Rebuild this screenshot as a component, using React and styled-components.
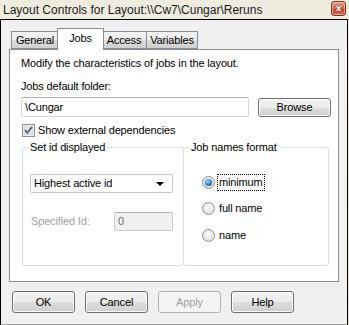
import React from 'react'
import styled, { createGlobalStyle } from 'styled-components'

const GlobalStyle = createGlobalStyle`
  html, body {
    margin: 0;
    padding: 0;
    background: #e9e4d6;
  }
  body {
    font-family: 'Liberation Sans', Arial, sans-serif;
    font-size: 11px;
    letter-spacing: -0.15px;
    color: #000;
  }
  * { box-sizing: border-box; }
`

const Window = styled.div`
  width: 349px;
  height: 325px;
  display: flex;
  flex-direction: column;
  background: linear-gradient(#efebdf, #e6e0cf);
  overflow: hidden;
`

const TitleBar = styled.div`
  height: 19px;
  display: flex;
  align-items: flex-start;
  padding: 0 3px 0 3px;
`

const Title = styled.div`
  flex: 1;
  font-family: 'Liberation Sans', Arial, sans-serif;
  font-size: 12px;
  letter-spacing: 0;
  line-height: 14px;
  padding-top: 3px;
  color: #1b1b1b;
  white-space: nowrap;
`

const CloseButton = styled.div`
  width: 15px;
  height: 15px;
  margin-top: 1px;
  border: 1px solid #7a3222;
  border-radius: 3px;
  background: linear-gradient(#e8a08c, #d2654c 50%, #c2432b 51%, #cf6a4e);
  box-shadow: inset 0 0 0 1px rgba(255, 220, 200, 0.5);
  display: flex;
  align-items: center;
  justify-content: center;
  color: #fff;
  font-family: 'DejaVu Sans', sans-serif;
  font-weight: bold;
  font-size: 9px;
  line-height: 1;
  text-shadow: 0 0 1px #5a1a10, 0 0 1px #5a1a10;
`

const Client = styled.div`
  flex: 1;
  margin-right: 1px;
  background: #f0f0f0;
  border: 1px solid #000;
  border-bottom-color: #a0a0a0;
  padding: 8px 0 0 8px;
  display: flex;
  flex-direction: column;
`

const TabStrip = styled.div`
  height: 21px;
  display: flex;
  align-items: flex-end;
  padding-left: 2px;
  position: relative;
  z-index: 1;
`

const Tab = styled.div`
  width: ${p => p.w}px;
  height: ${p => (p.active ? 22 : 18)}px;
  margin: ${p => (p.active ? '0 -2px -1px -2px' : '0 0 0 -1px')};
  border: 1px solid #898c95;
  border-bottom: ${p => (p.active ? 'none' : '1px solid #898c95')};
  background: ${p => (p.active ? '#fff' : 'linear-gradient(#f2f2f2, #ebebeb 50%, #dddddd 51%, #cfcfcf)')};
  z-index: ${p => (p.active ? 2 : 1)};
  display: flex;
  justify-content: center;
  padding-top: ${p => (p.active ? 3 : 2)}px;
  line-height: 13px;
  &:first-child { margin-left: 0; }
`

const Panel = styled.div`
  width: 330px;
  height: 233px;
  background: #fff;
  border: 1px solid #898c95;
  padding: 7px 0 0 11px;
  display: flex;
  flex-direction: column;
`

const Text = styled.div`
  line-height: 13px;
  margin-top: ${p => p.mt || 0}px;
  color: ${p => (p.disabled ? '#a0a0a0' : '#000')};
`

const Label = styled(Text)`
  width: ${p => p.w}px;
  padding-left: 1px;
`

const Row = styled.div`
  display: flex;
  align-items: center;
  margin-top: ${p => p.mt || 0}px;
  gap: ${p => p.gap || 0}px;
`

const TextBox = styled.div`
  width: ${p => p.w}px;
  height: ${p => p.h || 20}px;
  border: 1px solid ${p => (p.disabled ? '#c9c9c9' : '#d5d9de')};
  border-top-color: ${p => (p.disabled ? '#afafaf' : '#abadb3')};
  border-radius: 2px;
  background: ${p => (p.disabled ? '#f0f0f0' : '#fff')};
  color: ${p => (p.disabled ? '#6d6d6d' : '#000')};
  padding-left: 3px;
  display: flex;
  align-items: center;
  line-height: 13px;
`

const Button = styled.div`
  width: ${p => p.w}px;
  height: ${p => p.h}px;
  border: 1px solid ${p => (p.disabled ? '#adb2b5' : '#707070')};
  border-radius: 3px;
  background: ${p =>
    p.disabled
      ? '#f4f4f4'
      : 'linear-gradient(#f2f2f2, #ebebeb 50%, #dddddd 51%, #cfcfcf)'};
  box-shadow: inset 0 0 0 1px ${p => (p.disabled ? '#f4f4f4' : '#fcfcfc')};
  color: ${p => (p.disabled ? '#a0a0a0' : '#000')};
  display: flex;
  align-items: center;
  justify-content: center;
  line-height: 13px;
`

const CheckRow = styled.label`
  display: flex;
  align-items: center;
  gap: 3px;
  margin-top: 7px;
  margin-left: 1px;
  line-height: 13px;
`

const Groups = styled.div`
  display: flex;
  margin-top: 4px;
  margin-left: 1px;
`

const Group = styled.fieldset`
  width: ${p => p.w}px;
  height: 125px;
  margin: 0 0 0 ${p => p.ml || 0}px;
  padding: 0;
  border: 1px solid #d5dfe5;
  border-radius: 3px;
  min-width: 0;
`

const Legend = styled.legend`
  padding: 0 2px;
  margin-left: 5px;
  line-height: 13px;
`

const GroupBody = styled.div`
  display: flex;
  flex-direction: column;
  padding-left: ${p => p.pl}px;
`

const Select = styled.div`
  width: 143px;
  height: 19px;
  margin-top: 20px;
  border: 1px solid #c5c5c5;
  border-radius: 2px;
  background: #fff;
  display: flex;
  align-items: center;
  justify-content: space-between;
  padding: 0 8px 0 3px;
  line-height: 13px;
`

const Arrow = styled.div`
  width: 0;
  height: 0;
  border-left: 4px solid transparent;
  border-right: 4px solid transparent;
  border-top: 4px solid #000;
`

const RadioRow = styled.div`
  display: flex;
  align-items: center;
  gap: 4px;
  margin-top: ${p => p.mt}px;
  line-height: 13px;
`

const RadioDot = styled.span`
  width: 13px;
  height: 13px;
  border-radius: 50%;
  border: 1px solid #8e8f8f;
  background: radial-gradient(circle at 50% 40%, #ffffff, #e6e6e6 60%, #d0d0d0);
  display: flex;
  align-items: center;
  justify-content: center;
  &::after {
    content: '';
    display: ${p => (p.checked ? 'block' : 'none')};
    width: 7px;
    height: 7px;
    border-radius: 50%;
    background: radial-gradient(circle at 40% 35%, #a6dcff, #1a76c0 60%, #0a3f7a);
  }
`

const Focus = styled.span`
  outline: 1px dotted #000;
  outline-offset: 1px;
`

const Footer = styled.div`
  display: flex;
  gap: 10px;
  margin-top: 9px;
  padding-left: 3px;
`

const CheckBox = () => (
  <svg width="13" height="13" viewBox="0 0 13 13">
    <rect x="0.5" y="0.5" width="12" height="12" fill="#fff" stroke="#8e8f8f" />
    <rect x="2" y="2" width="9" height="9" fill="#e4e6ea" stroke="#c3c7cf" strokeWidth="0.6" />
    <path d="M3 6.2 L5.3 8.8 L10 3" fill="none" stroke="#4d6185" strokeWidth="1.8" />
  </svg>
)

const App = () => {
  return (
    <Window>
      <GlobalStyle />
      <TitleBar>
        <Title>{'Layout Controls for Layout:\\\\Cw7\\Cungar\\Reruns'}</Title>
        <CloseButton>x</CloseButton>
      </TitleBar>
      <Client>
        <TabStrip>
          <Tab w={48}>General</Tab>
          <Tab w={47} active>Jobs</Tab>
          <Tab w={46}>Access</Tab>
          <Tab w={52}>Variables</Tab>
        </TabStrip>
        <Panel>
          <Text>Modify the characteristics of jobs in the layout.</Text>
          <Text mt={10}>Jobs default folder:</Text>
          <Row mt={4} gap={9}>
            <TextBox w={228} h={20}>{'\\Cungar'}</TextBox>
            <Button w={73} h={19}>Browse</Button>
          </Row>
          <CheckRow>
            <CheckBox />
            Show external dependencies
          </CheckRow>
          <Groups>
            <Group w={162}>
              <Legend>Set id displayed</Legend>
              <GroupBody pl={7}>
                <Select>
                  Highest active id
                  <Arrow />
                </Select>
                <Row mt={19}>
                  <Label w={84} disabled>Specified Id:</Label>
                  <TextBox w={59} h={19} disabled>0</TextBox>
                </Row>
              </GroupBody>
            </Group>
            <Group w={146} ml={-1}>
              <Legend>Job names format</Legend>
              <GroupBody pl={18}>
                <RadioRow mt={22}>
                  <RadioDot checked />
                  <Focus>minimum</Focus>
                </RadioRow>
                <RadioRow mt={13}>
                  <RadioDot />
                  full name
                </RadioRow>
                <RadioRow mt={14}>
                  <RadioDot />
                  name
                </RadioRow>
              </GroupBody>
            </Group>
          </Groups>
        </Panel>
        <Footer>
          <Button w={63} h={22}>OK</Button>
          <Button w={63} h={22}>Cancel</Button>
          <Button w={63} h={22} disabled>Apply</Button>
          <Button w={63} h={22}>Help</Button>
        </Footer>
      </Client>
    </Window>
  )
}

export default App
